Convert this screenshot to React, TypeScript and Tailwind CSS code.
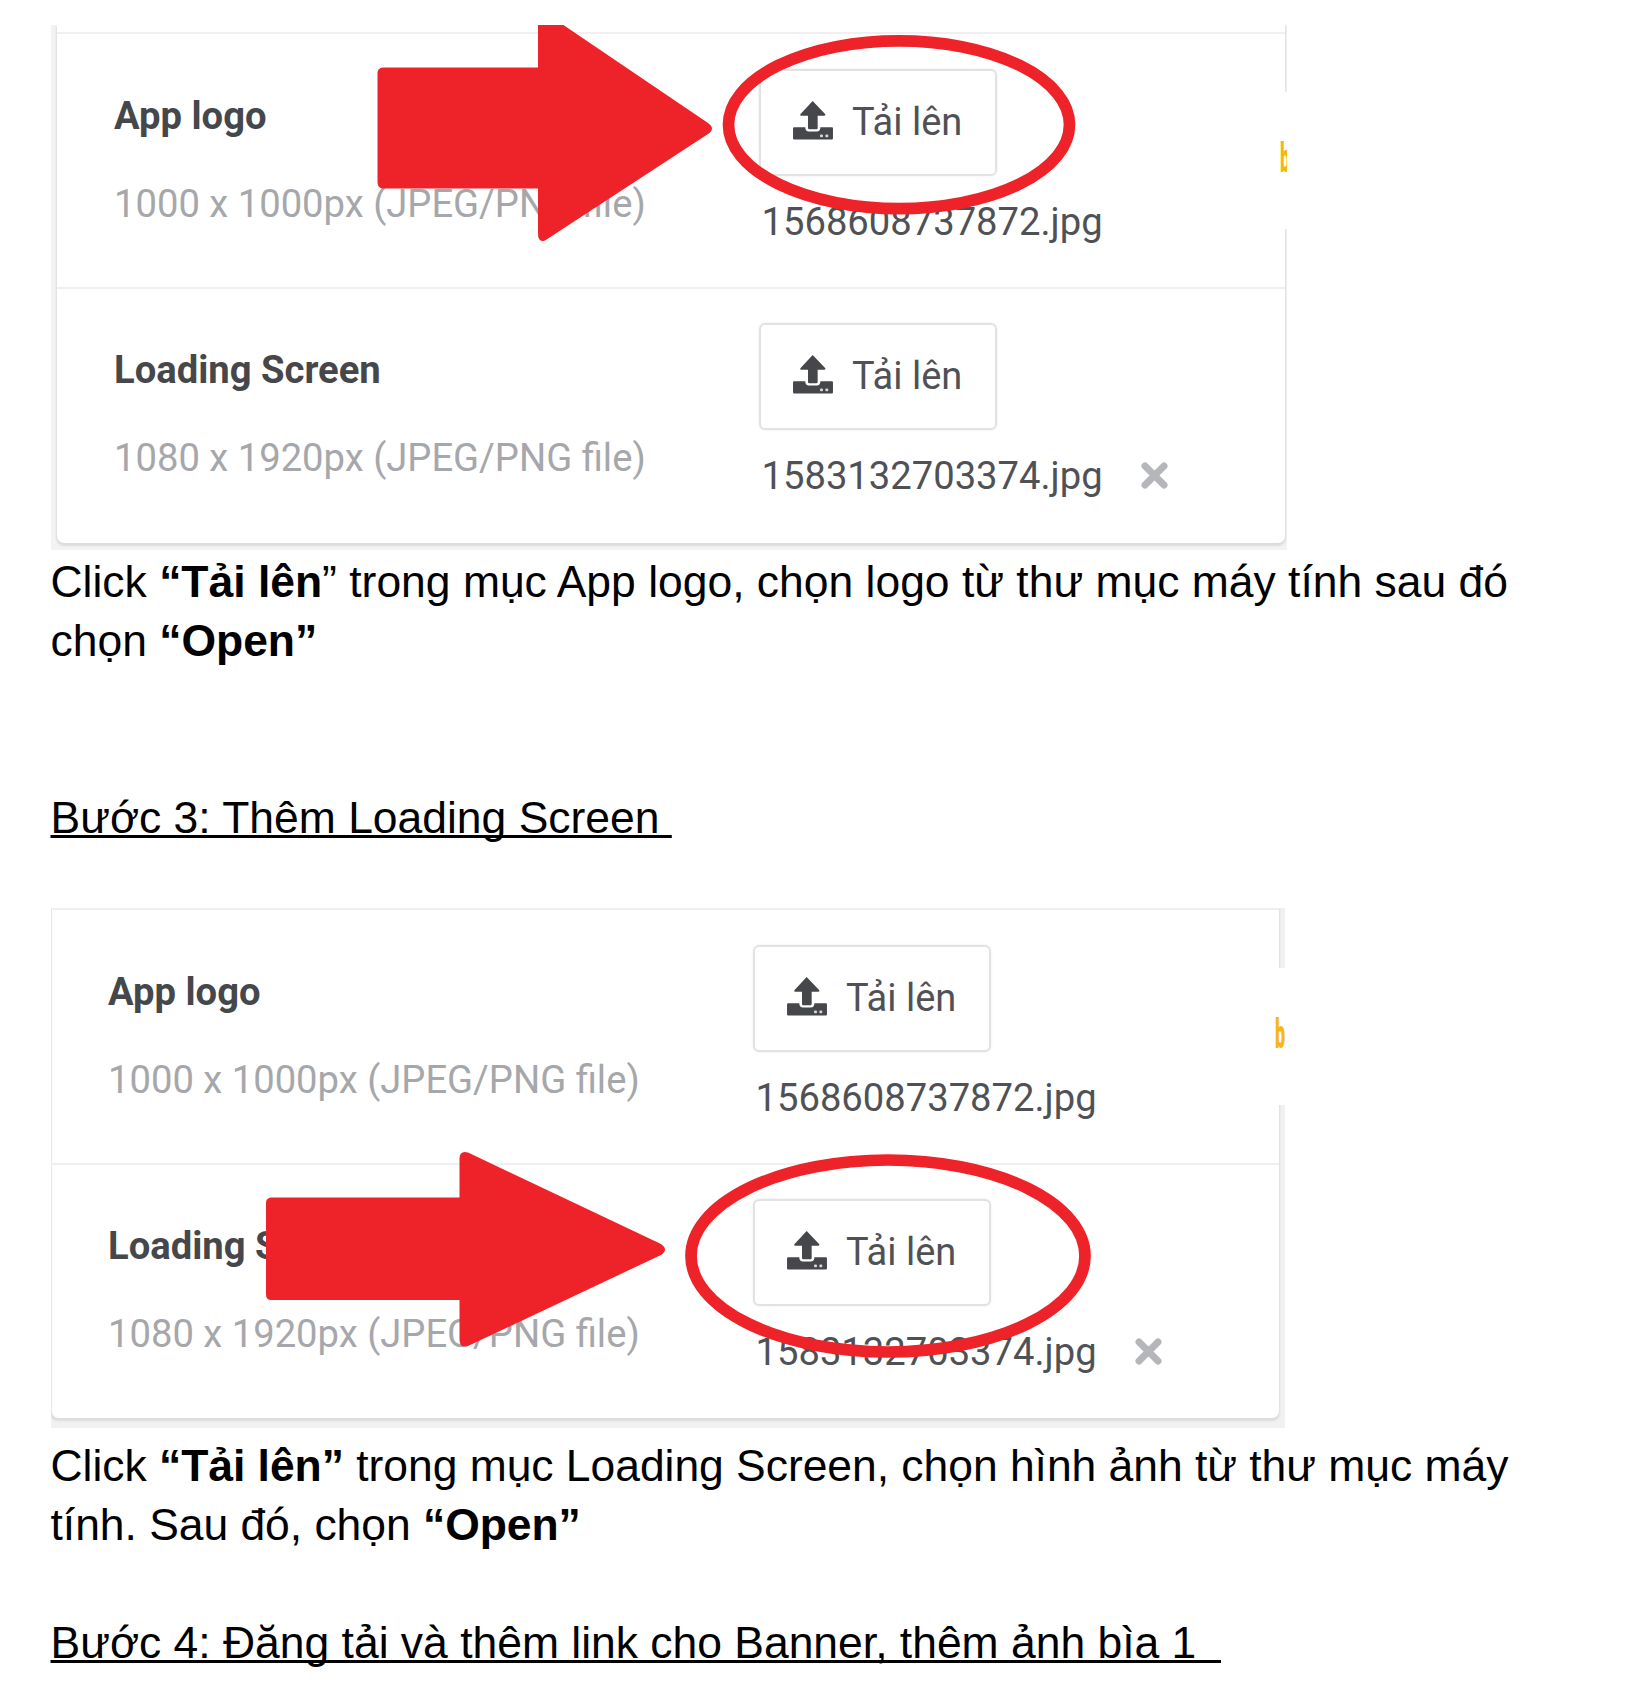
import React from "react";

function UploadIcon() {
  return (
    <svg viewBox="0 0 120 116" className="-mt-[4px] h-[38.6px] w-[40px] shrink-0" fill="#45474b">
      <path d="M59 0 L97 40 Q99 44 94 44 H74 V81 Q74 85 70 85 H49 Q45 85 45 81 V44 H24 Q20 44 22 40 Z" />
      <path d="M3 79 H37 V83 Q39 92 47 92 H72 Q80 92 82 83 V79 H117 Q120 79 120 82 V112 Q120 116 117 116 H3 Q0 116 0 112 V82 Q0 79 3 79 Z" />
      <rect x="81" y="101" width="9" height="8" rx="3" fill="#d5d6d7" />
      <rect x="97" y="101" width="9" height="8" rx="3" fill="#d5d6d7" />
    </svg>
  );
}

function RemoveIcon() {
  return (
    <svg viewBox="0 0 27 27" className="-mt-[1px] ml-[38px] h-[27px] w-[27px] shrink-0">
      <path d="M4 4 L23 23 M23 4 L4 23" stroke="#b5b6b9" strokeWidth="7" strokeLinecap="round" fill="none" />
    </svg>
  );
}

type RowProps = { title: string; hint: string; file: string; removable?: boolean };

function UploadRow({ title, hint, file, removable }: RowProps) {
  return (
    <div className="flex h-[254px] shrink-0 whitespace-nowrap text-[38.2px] leading-[44px]">
      <div className="ml-[57px] w-[645px] shrink-0 pt-[60px]">
        <div className="font-bold text-[#45474b]">{title}</div>
        <div className="mt-[44px] text-[#a6a7ab]">{hint}</div>
      </div>
      <div className="shrink-0 pt-[35px] text-[#505155]">
        <div className="flex h-[107px] w-[238px] items-center rounded-[6px] border-2 border-[#e2e2e3] pl-[32px] shadow-[0_0_3px_rgba(0,0,0,0.08)]">
          <UploadIcon />
          <span className="-mt-[1px] ml-[19px] text-[38px]">Tải lên</span>
        </div>
        <div className="mt-[24px] ml-[2.500px] flex items-center">
          <span>{file}</span>
          {removable && <RemoveIcon />}
        </div>
      </div>
    </div>
  );
}

function Rows() {
  return (
    <>
      <UploadRow title="App logo" hint="1000 x 1000px (JPEG/PNG file)" file="1568608737872.jpg" />
      <div className="-mt-[1px] -mb-[1px] h-[2px] shrink-0 bg-[#f0f0f3]" />
      <UploadRow title="Loading Screen" hint="1080 x 1920px (JPEG/PNG file)" file="1583132703374.jpg" removable />
    </>
  );
}

function CutLetter({ className }: { className: string }) {
  return (
    <div className={"absolute right-0 h-[137px] bg-white pt-[43px] text-[40px] leading-[47px] font-black text-[#f7b614] " + className}>
      <span className="block w-[24px] origin-left scale-x-[0.45]">b</span>
    </div>
  );
}

export default function App() {
  return (
    <div className="h-[1696px] w-[1652px] overflow-hidden bg-white pt-[25px] pl-[51px] font-['Liberation_Sans',sans-serif] text-[44.45px] leading-[59px] text-black">
      <div className="relative h-[525px] w-[1236px] overflow-hidden bg-[#f3f3f3] pl-[6px] font-[Roboto,sans-serif]">
        <div className="flex h-[518px] w-[1228px] flex-col rounded-b-[7px] bg-white shadow-[0_2px_2px_1px_#dddddf]">
          <div className="h-[7px] shrink-0" />
          <div className="h-[2px] shrink-0 bg-[#f0f0f3]" />
          <Rows />
        </div>
        <CutLetter className="top-[67px] w-[7px]" />
        <svg className="absolute top-0 left-0" width="1236" height="525" viewBox="51 25 1236 525">
          <path
            d="M383 67.5 H538 V20 H556 L708 123 Q716 128.500 708 134 L545 240.500 Q538 243 538 233 V188.500 H383 Q377.500 188 377.500 182 V73 Q377.500 68 383 67.500 Z"
            fill="#ee2229"
          />
          <ellipse cx="899" cy="124.700" rx="170.500" ry="83.900" fill="none" stroke="#ee2229" strokeWidth="11.700" />
        </svg>
      </div>

      <div className="-ml-[0.5px] h-[358px] pt-[2px] whitespace-nowrap">
        <p>
          Click <b>“Tải lên</b>” trong mục App logo, chọn logo từ thư mục máy tính sau đó
          <br />
          chọn <b>“Open”</b>
        </p>
        <p className="mt-[118px] whitespace-pre underline decoration-[3px] underline-offset-[2px] [text-decoration-skip-ink:none]">
          {"Bước 3: Thêm Loading Screen "}
        </p>
      </div>

      <div className="relative h-[520px] w-[1234px] overflow-hidden bg-[#f1f1f2] font-[Roboto,sans-serif]">
        <div className="flex h-[510px] w-[1228px] flex-col rounded-b-[7px] border-t-2 border-l border-t-[#efeff1] border-l-[#e6e6e8] bg-white shadow-[0_2px_2px_1px_#dddddf]">
          <div className="-ml-px">
            <Rows />
          </div>
        </div>
        <CutLetter className="top-[60px] w-[10px]" />
        <svg className="absolute top-0 left-0" width="1234" height="520" viewBox="51 908 1234 520">
          <path
            d="M271 1197.500 H459.500 V1158 Q460 1150 468 1152.500 L661 1244 Q669 1249.500 661 1255 L468 1346 Q460 1348.500 459.500 1340 V1300 H271 Q266 1300 266 1294 V1203 Q266 1198 271 1197.500 Z"
            fill="#ee2229"
          />
          <ellipse cx="888" cy="1256" rx="197" ry="96" fill="none" stroke="#ee2229" strokeWidth="11.700" />
        </svg>
      </div>

      <div className="-ml-[0.5px] pt-[8px] whitespace-nowrap">
        <p className="tracking-[-0.03px]">
          Click <b>“Tải lên”</b> trong mục Loading Screen, chọn hình ảnh từ thư mục máy
          <br />
          tính. Sau đó, chọn <b>“Open”</b>
        </p>
        <p className="mt-[59px] whitespace-pre underline decoration-[3px] underline-offset-[2px] [text-decoration-skip-ink:none]">
          {"Bước 4: Đăng tải và thêm link cho Banner, thêm ảnh bìa 1  "}
        </p>
      </div>
    </div>
  );
}
